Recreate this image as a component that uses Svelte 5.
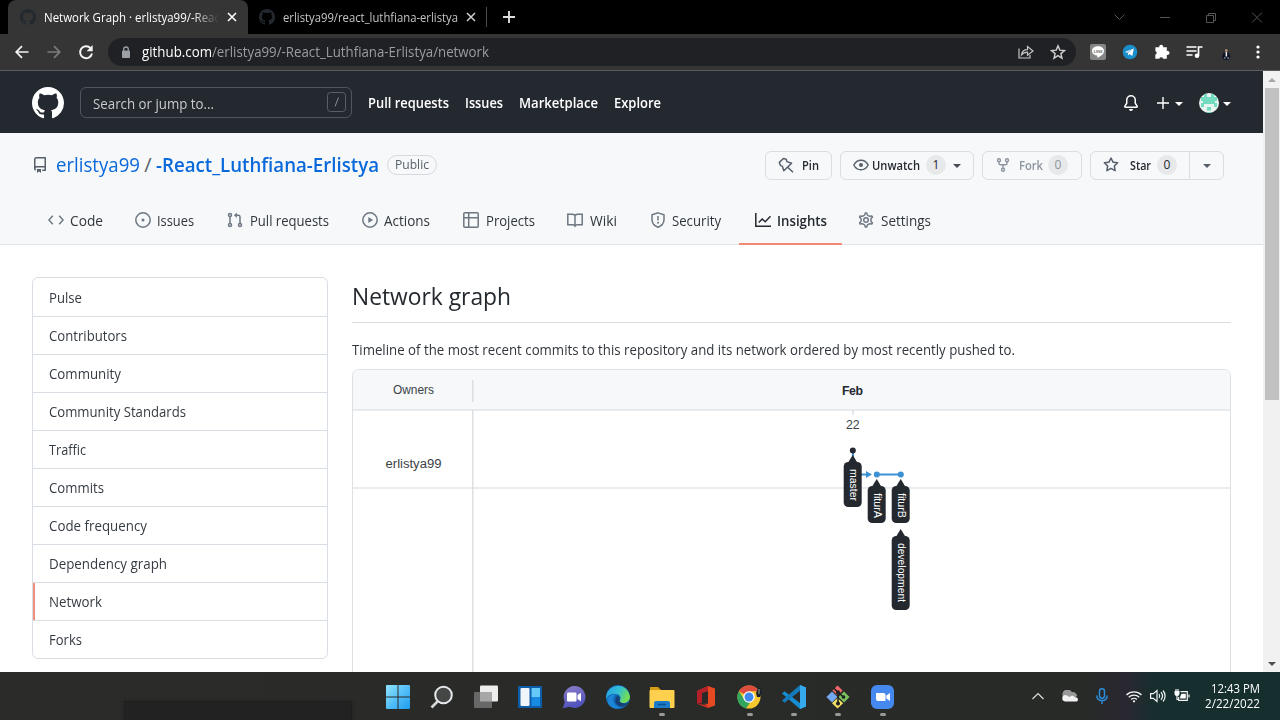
<script>
  // Condenses a label horizontally so it takes its intended width.
  function fit(el, width) {
    const natural = el.getBoundingClientRect().width;
    el.style.width = width + 'px';
    el.style.transform = `scaleX(${width / natural})`;
  }

  const mark = 'M8 0C3.58 0 0 3.58 0 8c0 3.54 2.29 6.53 5.47 7.59.4.07.55-.17.55-.38 0-.19-.01-.82-.01-1.49-2.01.37-2.53-.49-2.69-.94-.09-.23-.48-.94-.82-1.13-.28-.15-.68-.52-.01-.53.63-.01 1.08.58 1.23.82.72 1.21 1.87.87 2.33.66.07-.52.28-.87.51-1.07-1.78-.2-3.64-.89-3.64-3.95 0-.87.31-1.59.82-2.15-.08-.2-.36-1.02.08-2.12 0 0 .67-.21 2.2.82.64-.18 1.32-.27 2-.27.68 0 1.36.09 2 .27 1.53-1.04 2.2-.82 2.2-.82.44 1.1.16 1.92.08 2.12.51.56.82 1.27.82 2.15 0 3.07-1.87 3.75-3.65 3.95.29.25.54.73.54 1.48 0 1.07-.01 1.93-.01 2.2 0 .21.15.46.55.38A8.013 8.013 0 0016 8c0-4.42-3.58-8-8-8z';
  const starPath = 'M8 .25a.75.75 0 01.673.418l1.882 3.815 4.21.612a.75.75 0 01.416 1.279l-3.046 2.97.719 4.192a.75.75 0 01-1.088.791L8 12.347l-3.766 1.98a.75.75 0 01-1.088-.79l.72-4.194L.818 6.374a.75.75 0 01.416-1.28l4.21-.611L7.327.668A.75.75 0 018 .25zm0 2.445L6.615 5.5a.75.75 0 01-.564.41l-3.097.45 2.24 2.184a.75.75 0 01.216.664l-.528 3.084 2.769-1.456a.75.75 0 01.698 0l2.77 1.456-.53-3.084a.75.75 0 01.216-.664l2.24-2.183-3.096-.45a.75.75 0 01-.564-.41L8 2.694v.001z';
  const gearPath = 'M7.429 1.525a6.593 6.593 0 011.142 0c.036.003.108.036.137.146l.289 1.105c.147.56.55.967.997 1.189.174.086.341.183.501.29.417.278.97.423 1.53.27l1.102-.303c.11-.03.175.016.195.046.219.31.41.641.573.989.014.031.022.11-.059.19l-.815.806c-.411.406-.562.957-.53 1.456a4.588 4.588 0 010 .582c-.032.499.119 1.05.53 1.456l.815.806c.08.08.073.159.059.19a6.494 6.494 0 01-.573.99c-.02.029-.086.074-.195.045l-1.103-.303c-.559-.153-1.112-.008-1.529.27-.16.107-.327.204-.5.29-.449.222-.851.628-.998 1.189l-.289 1.105c-.029.11-.101.143-.137.146a6.613 6.613 0 01-1.142 0c-.036-.003-.108-.037-.137-.146l-.289-1.105c-.147-.56-.55-.967-.997-1.189a4.502 4.502 0 01-.501-.29c-.417-.278-.97-.423-1.53-.27l-1.102.303c-.11.03-.175-.016-.195-.046a6.492 6.492 0 01-.573-.989c-.014-.031-.022-.11.059-.19l.815-.806c.411-.406.562-.957.53-1.456a4.587 4.587 0 010-.582c.032-.499-.119-1.05-.53-1.456l-.815-.806c-.08-.08-.073-.159-.059-.19a6.44 6.44 0 01.573-.99c.02-.029.086-.075.195-.045l1.103.303c.559.153 1.112.008 1.529-.27.16-.107.327-.204.5-.29.449-.222.851-.628.998-1.189l.289-1.105c.029-.11.101-.143.137-.146z';

  const topNav = [['Pull requests', 81], ['Issues', 38], ['Marketplace', 79], ['Explore', 47]];

  const tabs = [
    { name: 'Code', w: 87, text: 33, gap: 6 },
    { name: 'Issues', w: 92, text: 37, gap: 6 },
    { name: 'Pull requests', w: 135, text: 79, gap: 7 },
    { name: 'Actions', w: 101, text: 46, gap: 6 },
    { name: 'Projects', w: 104, text: 49, gap: 7 },
    { name: 'Wiki', w: 83, text: 27, gap: 7 },
    { name: 'Security', w: 104.5, text: 49, gap: 6 },
    { name: 'Insights', w: 103.5, text: 50, gap: 6 },
    { name: 'Settings', w: 105, text: 50, gap: 7 }
  ];

  const side = [
    ['Pulse', 33], ['Contributors', 78], ['Community', 72], ['Community Standards', 137], ['Traffic', 37],
    ['Commits', 55], ['Code frequency', 98], ['Dependency graph', 118], ['Network', 53], ['Forks', 33]
  ];

  const branches = [
    { name: 'master', x: 500, y: 86, h: 45, len: 32 },
    { name: 'fiturA', x: 524, y: 110, h: 37, len: 25 },
    { name: 'fiturB', x: 548, y: 110, h: 37, len: 25 },
    { name: 'development', x: 548, y: 160, h: 74, len: 59 }
  ];
</script>

{#snippet caret(color)}
  <svg class="caret" width="8" height="4" viewBox="0 0 8 4"><path d="M0 0h8L4 4z" fill={color} /></svg>
{/snippet}

<div class="screen">
  <div class="tabstrip">
    <div class="btab active">
      <svg width="16" height="16" viewBox="0 0 16 16"><path d={mark} fill="#24292f" /></svg>
      <span class="title fade"><span use:fit={176}>Network Graph · erlistya99/-Reac</span></span>
      <svg width="10" height="10" viewBox="0 0 10 10"><path d="M1 1l8 8M9 1L1 9" stroke="#fff" stroke-width="1.6" /></svg>
    </div>
    <div class="btab second">
      <svg width="16" height="16" viewBox="0 0 16 16"><path d={mark} fill="#24292f" /></svg>
      <span class="title dim"><span use:fit={175}>erlistya99/react_luthfiana-erlistya</span></span>
      <svg width="10" height="10" viewBox="0 0 10 10"><path d="M1 1l8 8M9 1L1 9" stroke="#d0d0d0" stroke-width="1.5" /></svg>
    </div>
    <i class="tabsep"></i>
    <svg class="newtab" width="12" height="12" viewBox="0 0 12 12"><path d="M6 0v12M0 6h12" stroke="#ddd" stroke-width="1.9" /></svg>
    <svg class="winctl" width="150" height="14" viewBox="0 0 150 14" fill="none" stroke="#555" stroke-width="1">
      <path d="M1.500 4.500l5 5 5-5M47 7.500h10M93.500 5.500h7v7h-7zM95.500 5.500v-2h7v7h-2M139 2.500l10 10M149 2.500l-10 10" />
    </svg>
  </div>

  <div class="toolbar">
    <span class="cell"><svg width="16" height="16" viewBox="0 0 16 16" fill="none" stroke="#f4f4f4" stroke-width="1.7"><path d="M14.500 8H2M8 2.200L2.200 8 8 13.800" /></svg></span>
    <span class="cell"><svg width="16" height="16" viewBox="0 0 16 16" fill="none" stroke="#7b7b7b" stroke-width="1.7"><path d="M1.500 8H14M8 2.200L13.800 8 8 13.800" /></svg></span>
    <span class="cell"><svg width="16" height="16" viewBox="0 0 16 16"><path d="M12.600 4.200A6 6 0 1 0 14 9.500" fill="none" stroke="#f4f4f4" stroke-width="1.900" /><path d="M14.700 1v6.200H8.500z" fill="#f4f4f4" /></svg></span>
    <div class="omnibox">
      <svg width="10" height="13" viewBox="0 0 10 13"><rect x="1" y="4.500" width="8" height="7.500" rx="1" fill="#9aa0a6" /><path d="M2.700 5V3.300a2.300 2.300 0 0 1 4.600 0V5" fill="none" stroke="#9aa0a6" stroke-width="1.300" /></svg>
      <span class="url"><b use:fit={70}>github.com</b><span use:fit={277}>/erlistya99/-React_Luthfiana-Erlistya/network</span></span>
      <span class="cell"><svg width="16" height="16" viewBox="0 0 16 16" fill="none" stroke="#c4c4c4" stroke-width="1.200"><path d="M1 4.500v9.500h11v-3M3.500 11c.4-4 3-5.300 6-5.300V2.500L15 7l-5.500 4.300V8.200c-2.700 0-4.500.8-6 2.800z" /></svg></span>
      <span class="cell"><svg width="16" height="16" viewBox="0 0 16 16" fill="none" stroke="#d0d0d0" stroke-width="1.400"><path d="M8 1.800l1.800 4.300 4.700.4-3.600 3.100 1.100 4.600L8 11.700l-4 2.500 1.100-4.600L1.500 6.500l4.700-.4z" /></svg></span>
    </div>
    <span class="cell first">
      <svg width="16" height="16" viewBox="0 0 16 16"><rect width="16" height="16" rx="2" fill="#858585" /><path d="M8 2.300c-3.400 0-6 2-6 4.700 0 2.400 2 4.200 5 4.600l.5 2.200C10.500 12.500 14 10 14 7c0-2.700-2.600-4.700-6-4.700z" fill="#fff" /><text x="3.400" y="8.600" font-size="4.200" textLength="9.200" font-weight="700" fill="#777">LINE</text></svg>
    </span>
    <span class="cell"><svg width="16" height="16" viewBox="0 0 16 16"><circle cx="8" cy="8" r="7.300" fill="#1b8fca" /><path d="M3 8l8.800-3.600-1.500 7.700-2.900-2-1.300 1.500-.3-2.500 4.500-3.600-5.500 3.200z" fill="#fff" /></svg></span>
    <span class="cell"><svg width="16" height="16" viewBox="0 0 16 16" fill="#fff"><path d="M1.500 3.300h3.800a2 2 0 1 1 3.800 0h3.700v3.600a2.100 2.100 0 1 1 0 4v3.800H9.100a2 2 0 0 0-3.800 0H1.300v-4a2 2 0 0 0 0-3.800z" /></svg></span>
    <span class="cell"><svg width="17" height="14" viewBox="0 0 17 14"><path d="M.5 2h10M.5 6h10M.5 10h6M12.500 10.500V2h4" fill="none" stroke="#fff" stroke-width="1.700" /><circle cx="11" cy="10.800" r="2.300" fill="#fff" /></svg></span>
    <span class="cell"><svg width="12" height="16" viewBox="0 0 12 16"><path d="M3.500 8.500h5.500L10.500 13l-2.500 3H4l-2-3z" fill="#0e1524" /><circle cx="6.300" cy="6.500" r="1.300" fill="#c29b83" /><path d="M5.600 8h1.500v4.500H5.600z" fill="#eee" /><path d="M4 14h1.700M7.300 14H9" stroke="#aebccc" /></svg></span>
    <span class="cell"><svg width="4" height="14" viewBox="0 0 4 14" fill="#fff"><circle cx="2" cy="2" r="1.600" /><circle cx="2" cy="7" r="1.600" /><circle cx="2" cy="12" r="1.600" /></svg></span>
  </div>

  <div class="viewport">
    <div class="page">
      <header>
        <svg width="32" height="32" viewBox="0 0 16 16"><path d={mark} fill="#fff" /></svg>
        <div class="search"><span use:fit={121}>Search or jump to...</span>
          <svg width="20" height="20" viewBox="0 0 20 20" fill="none"><rect x=".5" y=".5" width="18" height="19" rx="3" stroke="#5a6069" /><path d="M11.500 5.500l-3.500 9" stroke="#8b9097" /></svg>
        </div>
        <nav>{#each topNav as [label, w]}<span style:width="{w}px"><span use:fit={w}>{label}</span></span>{/each}</nav>
        <div class="user">
          <svg width="16" height="16" viewBox="0 0 16 16" fill="#fff"><path d="M8 16a2 2 0 001.985-1.750c.017-.137-.097-.250-.235-.250h-3.500c-.138 0-.252.113-.235.250A2 2 0 008 16z" /><path fill-rule="evenodd" d="M8 1.500A3.500 3.500 0 004.500 5v2.947c0 .346-.102.683-.294.970l-1.703 2.556a.018.018 0 00-.003.010l.001.006c0 .002.002.004.004.006a.017.017 0 00.006.004l.007.001h10.964l.007-.001a.016.016 0 00.006-.004.016.016 0 00.004-.006l.001-.007a.017.017 0 00-.003-.010l-1.703-2.554a1.750 1.750 0 01-.294-.970V5A3.500 3.500 0 008 1.500zM3 5a5 5 0 0110 0v2.947c0 .050.015.098.042.139l1.703 2.555A1.518 1.518 0 0113.482 13H2.518a1.518 1.518 0 01-1.263-2.360l1.703-2.554A.250.250 0 003 7.947V5z" /></svg>
          <svg class="plus" width="12" height="12" viewBox="0 0 12 12"><path d="M6 0v12M0 6h12" stroke="#fff" stroke-width="1.400" /></svg>
          {@render caret('#fff')}
          <svg class="avatar" width="20" height="20" viewBox="0 0 20 20"><clipPath id="av"><circle cx="10" cy="10" r="10" /></clipPath><g clip-path="url(#av)"><path d="M0 0h20v20H0z" fill="#e9f3ef" /><path d="M5 1h3v3h4V1h3v3h3v4h-2v2h2v4h-3v-3H5v3H2v-4h2V8H2V4h3zM5 5h10v6H5zM6 13h8v7H6z" fill="#73dcc0" /><path d="M6 12h8v1h1v5h-1v1H6v-1H5v-5h1z" fill="#e9f3ef" /><path d="M8 14h4v3.500H8z" fill="#73dcc0" /></g></svg>
          {@render caret('#fff')}
        </div>
      </header>

      <section class="repohead">
        <div class="titlebar">
          <svg width="16" height="16" viewBox="0 0 16 16" fill="#57606a"><path fill-rule="evenodd" d="M2 2.500A2.500 2.500 0 014.500 0h8.750a.750.750 0 01.750.750v12.500a.750.750 0 01-.750.750h-2.500a.750.750 0 110-1.500h1.750v-2h-8a1 1 0 00-.714 1.700.750.750 0 01-1.072 1.050A2.495 2.495 0 012 11.500v-9zm10.500-1V9h-8c-.356 0-.694.074-1 .208V2.500a1 1 0 011-1h8zM5 12.250v3.250a.250.250 0 00.400.200l1.450-1.087a.250.250 0 01.300 0L8.600 15.700a.250.250 0 00.400-.200v-3.250a.250.250 0 00-.250-.250h-3.500a.250.250 0 00-.250.250z" /></svg>
          <a class="owner" href="#owner"><span use:fit={84}>erlistya99</span></a>
          <span class="slash">/</span>
          <a class="repo" href="#repo"><span use:fit={223}>-React_Luthfiana-Erlistya</span></a>
          <span class="badge"><span use:fit={34}>Public</span></span>
          <div class="actions">
            <div class="btn pin"><svg width="16" height="16" viewBox="0 0 16 16" fill="none" stroke="#57606a" stroke-width="1.500" stroke-linejoin="round"><path d="M5.500 1.500L1.300 5.400l1.200 3.200 1.800.5 1.500 4.700 7.800-7.500-4.700-1.700-.7-2.400zM10 10.500l5 4.800" /></svg><span use:fit={17}>Pin</span></div>
            <div class="btn watch"><svg width="16" height="16" viewBox="0 0 16 16" fill="none" stroke="#57606a" stroke-width="1.500"><path d="M.8 8C2.400 5 5 3.200 8 3.200S13.600 5 15.200 8C13.600 11 11 12.800 8 12.800S2.400 11 .8 8z" /><circle cx="8" cy="8" r="2" fill="#57606a" stroke="none" /></svg><span use:fit={48}>Unwatch</span><em>1</em>{@render caret('#444b53')}</div>
            <div class="btn fork"><svg width="16" height="16" viewBox="0 0 16 16" fill="none" stroke="#8c959f" stroke-width="1.400"><circle cx="4" cy="3.200" r="1.500" /><circle cx="12" cy="3.200" r="1.500" /><circle cx="8" cy="12.800" r="1.500" /><path d="M4 4.700v1.500c0 1 .6 1.600 1.600 1.600h4.800c1 0 1.600-.6 1.600-1.600V4.700M8 7.800v3.500" /></svg><span use:fit={24}>Fork</span><em>0</em></div>
            <div class="btn star"><svg width="16" height="16" viewBox="0 0 16 16"><path d={starPath} fill="#57606a" /></svg><span use:fit={21}>Star</span><em>0</em><i>{@render caret('#57606a')}</i></div>
          </div>
        </div>
        <div class="tabs">
          {#each tabs as t, i}
            <div class="tab" class:on={t.name === 'Insights'} style:width="{t.w}px" style:gap="{t.gap}px">
              <svg width="16" height="16" viewBox="0 0 16 16" fill="none" stroke="currentColor" stroke-width="1.500">
                {#if i === 0}<path d="M4.800 3.700L.9 8l3.900 4.300M11.200 3.700L15.100 8l-3.900 4.300" />
                {:else if i === 1}<circle cx="8" cy="8" r="7.200" /><circle cx="8" cy="8" r="1.500" fill="currentColor" stroke="none" />
                {:else if i === 2}<circle cx="3" cy="3" r="1.500" /><circle cx="3" cy="13" r="1.500" /><circle cx="13" cy="13" r="1.500" /><path d="M3 4.500v7M13 11.500V5c0-1-.7-1.800-1.800-1.800H9" /><path d="M9.800.5v5.400L7 3.200z" fill="currentColor" stroke="none" />
                {:else if i === 3}<circle cx="8" cy="8" r="7.200" /><path d="M6.300 5v6l4.800-3z" fill="currentColor" stroke="none" />
                {:else if i === 4}<rect x=".8" y=".8" width="14.400" height="14.400" rx="1" /><path d="M.8 5.700h14.400M5.700.8v14.400" />
                {:else if i === 5}<path d="M8 14.500V3.500C7.300 2.700 6.300 2.300 5 2.300H.8v10.500H6c.8 0 1.500.4 2 1.200.5-.8 1.200-1.200 2-1.200h5.200V2.300H11c-1.300 0-2.300.4-3 1.200" />
                {:else if i === 6}<path d="M8 .9l6 1.900v4.800c0 3.500-2.200 6.200-6 7.600-3.800-1.400-6-4.100-6-7.600V2.800zM8 4v4.500" /><circle cx="8" cy="10.800" r="1" fill="currentColor" stroke="none" />
                {:else if i === 7}<path d="M.8 1v13.200H16M3.800 10.600L7.200 7l3 2.800 5.300-5.500" />
                {:else}<g transform="translate(-.7 -.7) scale(1.088)" stroke-width="1.350"><path d={gearPath} /><circle cx="8" cy="8" r="2.100" /></g>{/if}
              </svg>
              <span use:fit={t.text}>{t.name}</span>
            </div>
          {/each}
        </div>
      </section>

      <div class="content">
        <aside>
          {#each side as [label, w]}<div class="item" class:sel={label === 'Network'}><span use:fit={w}>{label}</span></div>{/each}
        </aside>
        <main>
          <h2><span use:fit={159}>Network graph</span></h2>
          <p><span use:fit={663}>Timeline of the most recent commits to this repository and its network ordered by most recently pushed to.</span></p>
          <svg class="graph" width="880" height="304" viewBox="0 0 880 304">
            <path d="M.5 310V6.500a6 6 0 0 1 6-6h866a6 6 0 0 1 6 6V310" fill="#fff" stroke="#dde1e5" />
            <path d="M1 41V6.500A5.500 5.500 0 0 1 6.500 1h866a5.500 5.500 0 0 1 5.500 5.500V41z" fill="#f6f8fa" />
            <path d="M1 41h877M1 119h877M120.800 11v22M120.800 41v263M501 41v5" stroke="#d5d9dd" stroke-width="1.200" />
            <g class="arial">
              <text x="41" y="25" textLength="41" lengthAdjust="spacingAndGlyphs">Owners</text>
              <text x="33.500" y="99" textLength="56" lengthAdjust="spacingAndGlyphs">erlistya99</text>
              <text x="490" y="26" textLength="21" font-weight="700" fill="#24292f">Feb</text>
              <text x="494" y="60" textLength="13.500">22</text>
            </g>
            <path d="M501 82v23.500h15" fill="none" stroke="#3b91d2" stroke-width="2" />
            <path d="M514 102l6 3.500-6 3.500z" fill="#3b91d2" />
            <path d="M525 105.500h24" stroke="#3b91d2" stroke-width="2" />
            <circle cx="500.800" cy="81.500" r="3" fill="#24292f" /><circle cx="524.800" cy="105.500" r="3" fill="#3b91d2" /><circle cx="548.800" cy="105.500" r="3" fill="#3b91d2" />
            {#each branches as b}
              <g transform="translate({b.x + 0.7} {b.y})">
                <path d="M0 0l5.500 9h-11z" fill="#24292f" />
                <rect x="-9" y="7" width="18" height={b.h} rx="4.500" fill="#24292f" />
                <text class="branch" transform="translate(-2.700 14) rotate(90)" textLength={b.len} lengthAdjust="spacingAndGlyphs">{b.name}</text>
              </g>
            {/each}
          </svg>
        </main>
      </div>
    </div>
    <div class="scrollbar">
      <svg width="8" height="4" viewBox="0 0 8 4"><path d="M0 4h8L4 0z" fill="#a3a3a3" /></svg>
      <div class="thumb"></div>
      <svg class="down" width="8" height="4" viewBox="0 0 8 4"><path d="M0 0h8L4 4z" fill="#505050" /></svg>
    </div>
  </div>

  <footer>
    <div class="popup"></div>
    <div class="apps">
      <span><svg width="24" height="24" viewBox="0 0 24 24"><defs><linearGradient id="win" x2="1" y2="1"><stop stop-color="#8fe3ff" /><stop offset="1" stop-color="#1c9cf0" /></linearGradient></defs><path d="M0 1a1 1 0 0 1 1-1h10.500v11.500H0zM12.500 0H23a1 1 0 0 1 1 1v10.500H12.500zM0 12.500h11.500V24H1a1 1 0 0 1-1-1zM12.500 12.500H24V23a1 1 0 0 1-1 1H12.500z" fill="url(#win)" /></svg></span>
      <span><svg width="24" height="24" viewBox="0 0 24 24"><path d="M8 16l-6.500 6.500" stroke="#d4d7da" stroke-width="2.600" /><circle cx="13.500" cy="10" r="8.300" fill="#454747" stroke="#e4e7e9" stroke-width="2" /></svg></span>
      <span><svg width="24" height="24" viewBox="0 0 24 24"><rect x="6" y="0.500" width="18" height="16" rx="1" fill="#ededed" /><rect x="0" y="7" width="18" height="16" rx="1" fill="#686868" /><path d="M6 7h12v9.500H6z" fill="#a7a7a7" /></svg></span>
      <span><svg width="24" height="24" viewBox="0 0 24 24"><rect y="1" width="24" height="22" rx="1" fill="#0e5da8" /><rect x="2.500" y="3" width="9" height="18" rx="1" fill="#f0f5fa" /><path d="M13.500 3h8.500v9h-8.500z" fill="#65cafa" /><path d="M13.500 12h8.500v9h-8.500z" fill="#168be0" /></svg></span>
      <span><svg width="24" height="24" viewBox="0 0 24 24"><defs><linearGradient id="chat" x2=".3" y2="1"><stop stop-color="#8d7fca" /><stop offset="1" stop-color="#5052bd" /></linearGradient></defs><path d="M12.500 1a11 11 0 1 1-5 20.800L.8 23.300l2-6.300A11 11 0 0 1 12.500 1z" fill="url(#chat)" /><rect x="5" y="7.500" width="9.500" height="9" rx="1.200" fill="#fff" /><path d="M15.500 10l3.500-2.200v8.400L15.500 14z" fill="#fff" /></svg></span>
      <span><svg width="26" height="26" viewBox="0 0 26 26"><defs><linearGradient id="edge" x2="1" y2=".4"><stop stop-color="#2b9ee6" /><stop offset=".55" stop-color="#31bfd5" /><stop offset="1" stop-color="#72dd54" /></linearGradient></defs><circle cx="13" cy="13" r="12" fill="#1266b5" /><path d="M1.200 12A12 12 0 0 1 25 12.500c0 4-3 6.500-6.500 6.500-3 0-4.700-1.200-4-2.600 3-3-.2-6.600-5-6.600C5 9.800 2 12 1.200 16z" fill="url(#edge)" /><path d="M10.500 10.500C5.500 16 10 23.500 17 23.500c-7 3.200-14.500-1-14.700-7.500-.1-3.500 4-6 8.200-5.500z" fill="#1c85d5" /><path d="M14.500 16.300c.3 3.400 5.500 3.800 9 2.200-3 5-9.500 4.800-12 1.500-2-3-1.200-7 1.200-8 2 .8 2.300 2.800 1.800 4.300z" fill="#163f73" /></svg></span>
      <span class="open"><svg width="26" height="24" viewBox="0 0 26 24"><path d="M1 2h8l3 3h12v6H1z" fill="#d39b18" /><rect x=".5" y="5" width="25" height="18" rx="1" fill="#ffd04d" /><path d="M5 23v-5a2 2 0 0 1 2-2h12a2 2 0 0 1 2 2v5z" fill="#1b7bc8" /><path d="M9 19.500h8" stroke="#09508c" stroke-width="1.500" /></svg></span>
      <span><svg width="24" height="24" viewBox="0 0 24 24"><path d="M3 6L14 1l7 2.500v17L14 23z" fill="#e64a23" /><path d="M3 6L14 1v5L8 8v10l-5 1z" fill="#b51f29" /><path d="M8 8l6-2v13l-6-1z" fill="#292a27" /><path d="M3 19l11 1v3z" fill="#cf3125" /></svg></span>
      <span class="open"><svg width="26" height="24" viewBox="0 0 26 24"><circle cx="12" cy="12" r="11.500" fill="#f6c72f" /><path d="M2 6.300A11.500 11.500 0 0 1 22 6.300H12v5.700z" fill="#de4b3f" /><path d="M2 6.300L8 15.500l5 2-4 6A11.500 11.500 0 0 1 2 6.300z" fill="#31a65c" /><circle cx="12" cy="12" r="5.800" fill="#fff" /><circle cx="12" cy="12" r="4.500" fill="#4087ee" /><path d="M21 3h2l2 4-2 5h-3l-1-4z" fill="#18202b" /><path d="M22 4v5" stroke="#cda" stroke-width=".7" /></svg></span>
      <span class="open"><svg width="26" height="24" viewBox="0 0 26 24"><path d="M19 0l6 2.500v19L19 24 1 8.500l2.500-2.300L19 18z" fill="#168dd2" /><path d="M19 0v6L3.500 17.800 1 15.500z" fill="#1579ba" /><path d="M19 0l6 2.500v19L19 24z" fill="#36a9ed" /></svg></span>
      <span class="open"><svg width="26" height="24" viewBox="0 0 26 26"><path d="M12.500.5l5.500 5.500-5.500 5.500L7 6z" fill="#ef6769" /><path d="M19.500 7l6 6-6 6-6-6z" fill="#7bc15e" /><path d="M6.500 7l6 6-6 6-6-6z" fill="#75a9ef" /><path d="M12.500 14l6 5.700-6 5.800-6-5.800z" fill="#f5df65" /><path d="M8 3l5 5v13M13 8l6 5" fill="none" stroke="#202221" stroke-width="1.700" /><circle cx="13" cy="8" r="2.200" fill="#202221" /><circle cx="13" cy="20" r="2.200" fill="#202221" /><circle cx="19" cy="13" r="2" fill="#202221" /></svg></span>
      <span class="open"><svg width="24" height="24" viewBox="0 0 24 24"><rect width="23" height="24" rx="6" fill="#4589ee" /><path d="M5 8h7.500a2 2 0 0 1 2 2v6H7a2 2 0 0 1-2-2zM15.300 10.500L19 8v8l-3.700-2.500z" fill="#fff" /></svg></span>
    </div>
    <div class="tray">
      <span class="c32"><svg width="12" height="8" viewBox="0 0 12 8"><path d="M.5 7L6 1.500 11.500 7" fill="none" stroke="#ddd" stroke-width="1.200" /></svg></span>
      <span class="c32"><svg width="18" height="12" viewBox="0 0 18 12"><path d="M2 7a5 5 0 0 1 9-4.800A4 4 0 0 1 16 6l-4 3z" fill="#999" /><path d="M4 11.500a3.300 3.300 0 0 1 0-6.500c2 0 3 1.300 4.500 2 2-1.800 4-1.500 5 0 2 0 3.500 1 3.500 2.500s-1 2-2 2z" fill="#f1f1f1" /></svg></span>
      <span class="c32"><svg width="12" height="16" viewBox="0 0 12 16" fill="none" stroke="#2c8bd6" stroke-width="1.500"><rect x="3.500" y=".8" width="5" height="9.500" rx="2.500" /><path d="M.8 7.500c0 3 2 5 5.200 5s5.200-2 5.200-5M6 12.500V16" /></svg></span>
      <span class="c32"><svg width="16" height="13" viewBox="0 0 16 13" fill="none" stroke="#f2f2f2" stroke-width="1.300"><path d="M.5 5a10.600 10.600 0 0 1 15 0M2.800 7.300a7.300 7.300 0 0 1 10.400 0M5.200 9.500a4 4 0 0 1 5.600 0" /><circle cx="8" cy="11.300" r="1.100" fill="#fff" stroke="none" /></svg></span>
      <span class="c24 vol"><svg width="16" height="14" viewBox="0 0 16 14" fill="none" stroke="#f2f2f2" stroke-width="1.200"><path d="M.6 4.700h2.700L7 1.500v11L3.300 9.300H.6zM9 5c.9 1.200.9 2.800 0 4M11 3.200c1.900 2.300 1.900 5.300 0 7.600M13 1.500c2.800 3.200 2.800 7.800 0 11" /></svg></span>
      <span class="c24"><svg width="16" height="14" viewBox="0 0 16 14" fill="none" stroke="#f2f2f2" stroke-width="1.200"><path d="M6.500 2.700h6.800v8.600H4.700V8M15 5.500v3M3 6v4.500h2" /><path d="M2 0v2.500M4 0v2.500" /><path d="M.5 2h5v2.500a2.500 2.500 0 0 1-5 0zM7.500 4.700h4.300v4.800H6.200V7.500z" fill="#fff" stroke="none" /></svg></span>
      <div class="clock"><span use:fit={49}>12:43 PM</span><span use:fit={55}>2/22/2022</span></div>
    </div>
  </footer>
</div>

<style>
  :global(body) { margin: 0; overflow: hidden; }
  .screen { width: 1280px; height: 720px; display: flex; flex-direction: column; overflow: hidden; font: 14px "Open Sans", "Noto Sans", sans-serif; color: #24292f; background: #fff; }
  .screen *, .screen { box-sizing: border-box; }
  svg { display: block; flex: none; }
  span, a { white-space: pre; }
  span > span, a > span, h2 > span, p > span, .btn > span, b, .tab > span, .item > span, .search > span, .clock > span { display: inline-block; flex: none; transform-origin: 0 50%; }
  a { text-decoration: none; color: #0969da; }

  .tabstrip { height: 34px; background: #000; display: flex; align-items: center; padding-left: 8px; flex: none; }
  .btab { height: 34px; display: flex; align-items: center; font-size: 12.200px; color: #fff; }
  .btab.active { width: 240px; background: #353535; border-radius: 8px 8px 0 0; padding-left: 12px; }
  .btab.second { width: 238px; padding-left: 11px; }
  .title { width: 175px; margin: 0 8px; overflow: hidden; line-height: 20px; padding-top: 1px; }
  .fade { mask-image: linear-gradient(90deg, #000 148px, transparent 175px); }
  .dim { color: #c5c5c5; }
  .tabsep { width: 1px; height: 20px; background: #4c4c4c; }
  .newtab { margin-left: 16px; }
  .winctl { margin-left: 598px; }

  .toolbar { height: 37px; background: #353535; border-bottom: 1px solid #5c5d5f; display: flex; align-items: center; padding-left: 6px; flex: none; }
  .cell { width: 32px; display: flex; justify-content: center; flex: none; }
  .cell.first { margin-left: 6px; }
  .omnibox { width: 968px; height: 28px; border-radius: 14px; background: #202124; margin-left: 6px; padding: 0 2px 0 13px; display: flex; align-items: center; }
  .url { flex: 1; margin-left: 11px; color: #9a9da1; font-size: 14px; display: flex; padding-bottom: 1px; }
  .url b { font-weight: 400; color: #fff; }

  .viewport { height: 601px; display: flex; flex: none; }
  .page { width: 1263px; height: 601px; overflow: hidden; }
  header { height: 62px; background: #24292f; color: #fff; display: flex; align-items: center; padding: 2px 32px 0; }
  .search { width: 272px; height: 31px; margin: -2px 0 0 16px; border: 1px solid #50565f; border-radius: 6px; display: flex; align-items: center; justify-content: space-between; padding: 0 4px 0 12px; color: #c8cbcf; }
  .search > span { padding-top: 2px; }
  nav { display: flex; gap: 16px; margin-left: 16px; font-weight: 600; padding-bottom: 2px; }
  .user { margin-left: auto; display: flex; align-items: center; }
  .plus { margin: 0 6px 0 18px; }
  .caret { margin-top: 1px; }
  .avatar { margin: 0 4px 0 16px; }

  .repohead { height: 112px; background: #f6f8fa; border-bottom: 1px solid #dfe3e7; }
  .titlebar { height: 64px; padding: 0 39px 0 32px; display: flex; align-items: center; }
  .owner { font-size: 20px; margin-left: 8px; padding-bottom: 2px; }
  .slash { color: #57606a; font-size: 20px; width: 16px; text-align: center; padding-bottom: 2px; }
  .repo { font-size: 20px; font-weight: 600; padding-bottom: 2px; }
  .badge { height: 20px; width: 50px; margin-left: 8px; border: 1px solid #d5dae0; border-radius: 10px; font-size: 12px; font-weight: 500; color: #57606a; display: flex; align-items: center; justify-content: center; margin-top: -1px; }
  .actions { margin-left: auto; display: flex; gap: 8px; }
  .btn { height: 29px; border: 1px solid #dadde1; border-radius: 6px; background: #f6f8fa; display: flex; align-items: center; font-size: 12px; font-weight: 600; padding-left: 12px; }
  .btn em { width: 20px; height: 20px; border-radius: 10px; background: #e6e8ea; font-style: normal; font-size: 12px; font-weight: 500; text-align: center; line-height: 20px; }
  .pin { width: 67px; gap: 8px; }
  .watch { width: 134px; gap: 3px; }
  .watch em { margin-left: 3px; margin-right: 4px; }
  .fork { width: 100px; color: #8c959f; gap: 6px; }
  .fork > span { margin-left: 2px; }
  .fork em { margin-left: -1px; }
  .star { width: 134px; gap: 6px; }
  .star > span { margin-left: 5px; }
  .star i { margin-left: 6px; width: 34px; height: 27px; border-left: 1px solid #dadde1; display: flex; align-items: center; justify-content: center; }

  .tabs { display: flex; padding-left: 32px; height: 48px; }
  .tab { height: 48px; padding-left: 16px; display: flex; align-items: center; color: #6e7781; border-bottom: 2px solid transparent; flex: none; }
  .tab > span { color: #30363c; padding-top: 1px; }
  .tab.on { color: #24292f; border-bottom-color: #f58a74; }
  .tab.on > span { color: #24292f; font-weight: 600; }

  .content { display: flex; padding: 32px 32px 0; gap: 24px; }
  aside { width: 296px; height: 382px; border: 1px solid #d8dee4; border-radius: 6px; overflow: hidden; flex: none; }
  .item { height: 38px; display: flex; align-items: center; padding-left: 16px; border-top: 1px solid #d8dee4; color: #363c43; }
  .item:first-child { border-top-color: transparent; }
  .item.sel { box-shadow: inset 2px 0 #ee8f7d; }
  main { width: 880px; flex: none; }
  h2 { margin: 0; height: 46px; border-bottom: 1px solid #d8dee4; width: 879px; font-weight: 400; font-size: 24px; line-height: 37px; }
  p { margin: 0; height: 46px; line-height: 54px; color: #30363c; }
  .arial { font: 12.300px "Liberation Sans", Arial, sans-serif; fill: #3c4248; }
  .branch { font: 10px "Liberation Sans", Arial, sans-serif; fill: #fff; }

  .scrollbar { width: 17px; height: 601px; background: #f1f1f1; display: flex; flex-direction: column; align-items: center; padding: 7px 0 6px; }
  .thumb { width: 14px; height: 312px; background: #c1c1c1; margin-top: 6px; }
  .down { margin-top: auto; }

  footer { height: 48px; flex: none; display: flex; background: linear-gradient(90deg, #2b2c29 0, #282a28 1090px, #2a2731 1125px, #172e2e 1155px, #152f2e 1280px); }
  .popup { width: 228px; height: 19px; margin: 29px 0 0 124px; background: #222; border: 1px solid #1e1e1e; border-bottom: 0; box-shadow: 0 0 3px #222; flex: none; }
  .apps { display: flex; margin-left: 24px; }
  .apps span { width: 44.050px; display: flex; flex-direction: column; align-items: center; height: 48px; justify-content: center; padding-top: 1px; flex: none; }
  .apps .open::after { content: ''; width: 6px; height: 3px; border-radius: 2px; background: #999; margin: 4px 0 -7px; }
  .tray { display: flex; align-items: center; margin-left: 117px; }
  .c32 { width: 32px; display: flex; justify-content: center; flex: none; }
  .c24 { width: 24px; display: flex; justify-content: center; flex: none; }
  .vol { margin-left: -4px; }
  .clock { width: 66px; display: flex; flex-direction: column; align-items: flex-end; color: #fff; font-size: 12px; line-height: 15px; }
</style>
